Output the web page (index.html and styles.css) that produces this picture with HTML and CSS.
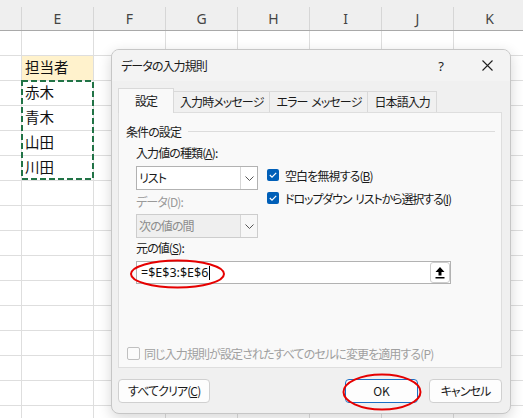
FILE: index.html
```html
<!DOCTYPE html>
<html lang="ja">
<head>
<meta charset="utf-8">
<title>データの入力規則</title>
<link rel="stylesheet" href="styles.css">
</head>
<body>
<div class="sheet">
  <div class="colhead">
    <div class="hc lead"></div>
    <div class="hc">E</div>
    <div class="hc">F</div>
    <div class="hc">G</div>
    <div class="hc">H</div>
    <div class="hc">I</div>
    <div class="hc">J</div>
    <div class="hc">K</div>
  </div>
  <div class="row"><div class="c lead"></div><div class="c"></div><div class="c"></div><div class="c"></div><div class="c"></div><div class="c"></div><div class="c"></div><div class="c"></div></div>
  <div class="row"><div class="c lead"></div><div class="c hl">担当者</div><div class="c"></div><div class="c"></div><div class="c"></div><div class="c"></div><div class="c"></div><div class="c"></div></div>
  <div class="row"><div class="c lead"></div><div class="c">赤木</div><div class="c"></div><div class="c"></div><div class="c"></div><div class="c"></div><div class="c"></div><div class="c"></div></div>
  <div class="row"><div class="c lead"></div><div class="c">青木</div><div class="c"></div><div class="c"></div><div class="c"></div><div class="c"></div><div class="c"></div><div class="c"></div></div>
  <div class="row"><div class="c lead"></div><div class="c">山田</div><div class="c"></div><div class="c"></div><div class="c"></div><div class="c"></div><div class="c"></div><div class="c"></div></div>
  <div class="row"><div class="c lead"></div><div class="c">川田</div><div class="c"></div><div class="c"></div><div class="c"></div><div class="c"></div><div class="c"></div><div class="c"></div></div>
  <div class="row"><div class="c lead"></div><div class="c"></div><div class="c"></div><div class="c"></div><div class="c"></div><div class="c"></div><div class="c"></div><div class="c"></div></div>
  <div class="row"><div class="c lead"></div><div class="c"></div><div class="c"></div><div class="c"></div><div class="c"></div><div class="c"></div><div class="c"></div><div class="c"></div></div>
  <div class="row"><div class="c lead"></div><div class="c"></div><div class="c"></div><div class="c"></div><div class="c"></div><div class="c"></div><div class="c"></div><div class="c"></div></div>
  <div class="row"><div class="c lead"></div><div class="c"></div><div class="c"></div><div class="c"></div><div class="c"></div><div class="c"></div><div class="c"></div><div class="c"></div></div>
  <div class="row"><div class="c lead"></div><div class="c"></div><div class="c"></div><div class="c"></div><div class="c"></div><div class="c"></div><div class="c"></div><div class="c"></div></div>
  <div class="row"><div class="c lead"></div><div class="c"></div><div class="c"></div><div class="c"></div><div class="c"></div><div class="c"></div><div class="c"></div><div class="c"></div></div>
  <div class="row"><div class="c lead"></div><div class="c"></div><div class="c"></div><div class="c"></div><div class="c"></div><div class="c"></div><div class="c"></div><div class="c"></div></div>
  <div class="row"><div class="c lead"></div><div class="c"></div><div class="c"></div><div class="c"></div><div class="c"></div><div class="c"></div><div class="c"></div><div class="c"></div></div>
  <div class="row"><div class="c lead"></div><div class="c"></div><div class="c"></div><div class="c"></div><div class="c"></div><div class="c"></div><div class="c"></div><div class="c"></div></div>
  <div class="row"><div class="c lead"></div><div class="c"></div><div class="c"></div><div class="c"></div><div class="c"></div><div class="c"></div><div class="c"></div><div class="c"></div></div>
  <svg class="marquee" width="523" height="418" viewBox="0 0 523 418">
    <rect x="22" y="81" width="71" height="98" fill="none" stroke="#217346" stroke-width="2" stroke-dasharray="6 3"/>
  </svg>
</div>

<div class="dialog">
  <div class="titlebar">
    <span class="title">データの入力規則</span>
    <span class="help">?</span>
    <span class="close">
      <svg width="11" height="11" viewBox="0 0 11 11"><path d="M0.5 0.5 L10.5 10.5 M10.5 0.5 L0.5 10.5" stroke="#1f1f1f" stroke-width="1.1" fill="none"/></svg>
    </span>
  </div>
  <div class="tabs">
    <div class="tab active">設定</div>
    <div class="tab">入力時メッセージ</div>
    <div class="tab">エラー メッセージ</div>
    <div class="tab">日本語入力</div>
  </div>
  <div class="panel">
    <div class="group"><span>条件の設定</span><span class="rule"></span></div>
    <div class="fields">
      <div class="fieldcol">
        <div class="lbl">入力値の種類(<u>A</u>):</div>
        <div class="combo">
          <span class="val">リスト</span>
          <span class="drop"><svg width="9" height="5" viewBox="0 0 9 5"><path d="M0.5 0.5 L4.5 4.5 L8.5 0.5" stroke="#555" stroke-width="1" fill="none"/></svg></span>
        </div>
        <div class="lbl dis">データ(D):</div>
        <div class="combo off">
          <span class="val">次の値の間</span>
          <span class="drop"><svg width="9" height="5" viewBox="0 0 9 5"><path d="M0.5 0.5 L4.5 4.5 L8.5 0.5" stroke="#555" stroke-width="1" fill="none"/></svg></span>
        </div>
      </div>
      <div class="checks">
        <div class="chk"><span class="box"><svg width="8" height="6" viewBox="0 0 8 6"><path d="M0.8 3 L3 5.1 L7.2 0.8" stroke="#fff" stroke-width="1.2" fill="none"/></svg></span><span>空白を無視する(<u>B</u>)</span></div>
        <div class="chk"><span class="box"><svg width="8" height="6" viewBox="0 0 8 6"><path d="M0.8 3 L3 5.1 L7.2 0.8" stroke="#fff" stroke-width="1.2" fill="none"/></svg></span><span class="tight">ドロップダウン リストから選択する(<u>I</u>)</span></div>
      </div>
    </div>
    <div class="lbl src">元の値(<u>S</u>):</div>
    <div class="refinput">
      <span class="reftext">=$E$3:$E$6</span><span class="caret"></span>
      <span class="upbtn"><svg width="10" height="12" viewBox="0 0 10 12"><path d="M5 0 L9.5 5 H6.5 V8.5 H3.5 V5 H0.5 Z" fill="#000"/><rect x="0.5" y="10" width="9" height="1.5" fill="#000"/></svg></span>
    </div>
    <div class="apply"><span class="box offbox"></span><span>同じ入力規則が設定されたすべてのセルに変更を適用する(P)</span></div>
  </div>
  <div class="buttons">
    <div class="btn clear">すべてクリア(<u>C</u>)</div>
    <div class="btn ok">OK</div>
    <div class="btn cancel">キャンセル</div>
  </div>
</div>

<svg class="marks" width="523" height="418" viewBox="0 0 523 418">
  <ellipse cx="177.5" cy="274" rx="46.5" ry="13.5" fill="none" stroke="#e60000" stroke-width="2"/>
  <ellipse cx="382" cy="392" rx="38.5" ry="17.5" fill="none" stroke="#e60000" stroke-width="2"/>
</svg>
</body>
</html>
```

FILE: styles.css
```css
* { box-sizing: border-box; }

body {
  margin: 0;
  width: 523px;
  height: 418px;
  overflow: hidden;
  position: relative;
  background: #fff;
  font-family: "Noto Sans CJK JP", "Noto Sans", sans-serif;
}

/* spreadsheet */
.sheet { position: relative; width: 523px; }

.colhead {
  display: flex;
  height: 31px;
  padding-top: 7px;
  background: #efefef;
  border-bottom: 1px solid #a9a9a9;
}
.hc {
  flex: none;
  width: 72px;
  border-right: 1px solid #d6d6d6;
  text-align: center;
  font: 14px/23px "Noto Sans", sans-serif;
  color: #444;
}
.hc.lead { width: 22px; }

.row {
  display: flex;
  height: 25px;
  border-bottom: 1px solid #dedede;
}
.c {
  flex: none;
  width: 72px;
  border-right: 1px solid #dedede;
  padding-left: 3px;
  font: 14.5px/22px "Noto Sans CJK JP", sans-serif;
  color: #111;
}
.c.lead { width: 22px; }
.c.hl { background: #fff2cc; }

.marquee, .marks {
  position: absolute;
  left: 0;
  top: 0;
  pointer-events: none;
}

/* dialog */
.dialog {
  position: absolute;
  left: 111px;
  top: 49px;
  width: 400px;
  height: 365px;
  display: flex;
  flex-direction: column;
  background: #f0f0f0;
  border: 1px solid #c6c6c6;
  border-radius: 8px;
  box-shadow: 0 4px 14px rgba(0, 0, 0, 0.16);
  overflow: hidden;
  font-size: 12px;
  font-feature-settings: "palt";
  letter-spacing: -0.9px;
  word-spacing: 2px;
  color: #1a1a1a;
}

.titlebar {
  flex: none;
  height: 31px;
  display: flex;
  align-items: center;
  padding-left: 9px;
  background: #f3f3f3;
}
.title { flex: 1; }
.help, .close {
  width: 46px;
  height: 31px;
  display: flex;
  align-items: center;
  justify-content: center;
}
.help { font: 13px "Noto Sans", sans-serif; color: #222; letter-spacing: 0; }

.tabs {
  flex: none;
  position: relative;
  z-index: 1;
  display: flex;
  align-items: flex-end;
  height: 24px;
  margin: 7px 0 0 6px;
}
.tab {
  min-width: 56px;
  height: 21px;
  padding: 0 6px;
  margin-right: -1px;
  border: 1px solid #d9d9d9;
  border-bottom: none;
  background: #f0f0f0;
  line-height: 19px;
  text-align: center;
  white-space: nowrap;
}
.tab.active {
  height: 25px;
  margin-bottom: -1px;
  background: #f9f9f9;
  line-height: 23px;
}

.panel {
  flex: none;
  height: 256px;
  margin: 0 8px 0 6px;
  padding: 10px 6px 0 7px;
  display: flex;
  flex-direction: column;
  background: #f9f9f9;
  border: 1px solid #dedede;
}

.group {
  display: flex;
  align-items: center;
  height: 16px;
}
.rule {
  flex: 1;
  height: 1px;
  margin-left: 7px;
  background: #dcdcdc;
}

.fields {
  display: flex;
  margin: 6px 0 0 10px;
}
.fieldcol {
  width: 122px;
  display: flex;
  flex-direction: column;
}
.lbl {
  height: 16px;
  line-height: 16px;
  white-space: nowrap;
}
.lbl.dis { margin-top: 4px; color: #9a9a9a; }
.lbl.src { margin: 2px 0 0 10px; }

.combo {
  height: 24px;
  margin-top: 5px;
  display: flex;
  background: #fff;
  border: 1px solid #b2b2b2;
}
.combo .val {
  flex: 1;
  padding-left: 2px;
  line-height: 22px;
}
.combo .drop {
  width: 17px;
  display: flex;
  align-items: center;
  justify-content: center;
  border-left: 1px solid #d6d6d6;
}
.combo.off {
  margin-top: 4px;
  background: #efefef;
  border-color: #cdcdcd;
  color: #8c8c8c;
}
.combo.off .drop { background: #f7f7f7; }

.checks {
  display: flex;
  flex-direction: column;
  gap: 7px;
  margin: 22px 0 0 9px;
}
.chk {
  display: flex;
  align-items: center;
  gap: 6px;
  height: 16px;
  white-space: nowrap;
}
.tight { letter-spacing: -1.1px; }
.box {
  flex: none;
  width: 12px;
  height: 12px;
  border-radius: 2px;
  background: #005fb8;
  display: flex;
  align-items: center;
  justify-content: center;
}

.refinput {
  width: 315px;
  height: 23px;
  margin: 5px 0 0 10px;
  padding-left: 4px;
  display: flex;
  align-items: center;
  background: #fff;
  border: 1px solid #b2b2b2;
}
.reftext {
  font: 12.5px "Noto Sans", sans-serif;
  color: #111;
  letter-spacing: 0;
  font-feature-settings: normal;
}
.caret {
  width: 1px;
  height: 14px;
  margin-left: 1px;
  background: #000;
}
.upbtn {
  margin-left: auto;
  width: 20px;
  height: 21px;
  display: flex;
  align-items: center;
  justify-content: center;
  background: #fff;
  border: 1px solid #cdcdcd;
  border-radius: 3px;
}

.apply {
  margin: auto 0 6px 1px;
  height: 16px;
  display: flex;
  align-items: center;
  gap: 4px;
  color: #a0a0a0;
  white-space: nowrap;
}
.box.offbox {
  width: 13px;
  height: 13px;
  background: #fbfbfb;
  border: 1px solid #c0c0c0;
}

.buttons {
  flex: none;
  display: flex;
  margin: 11px 8px 0 6px;
}
.btn {
  height: 24px;
  line-height: 22px;
  padding: 0 9px;
  background: #fdfdfd;
  border: 1px solid #d0d0d0;
  border-radius: 4px;
  white-space: nowrap;
}
.btn.ok, .btn.cancel {
  width: 73px;
  padding: 0;
  text-align: center;
}
.btn.ok {
  margin-left: auto;
  border-color: #1a6fc4;
  letter-spacing: 0;
}
.btn.cancel { margin-left: 11px; }
```
